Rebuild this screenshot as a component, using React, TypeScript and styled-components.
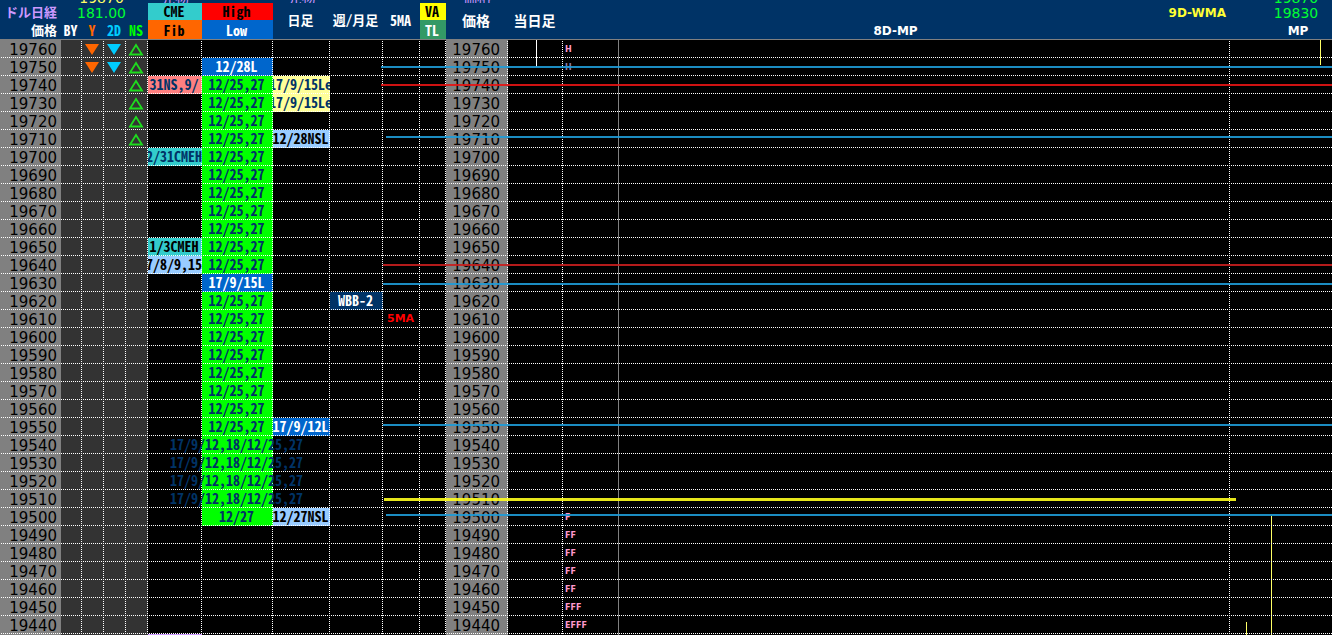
import React from "react";
import styled, { createGlobalStyle, css } from "styled-components";

const mono = `"Noto Sans CJK JP", sans-serif`;
const wide = `"DejaVu Sans", "Noto Sans CJK JP", sans-serif`;

const Global = createGlobalStyle`
  html, body { margin: 0; background: #000; }
  * { box-sizing: border-box; }
`;

const Board = styled.main`
  position: relative;
  height: 100vh;
  overflow: hidden;
  background: #000;
`;

const Grid = styled.table`
  width: 100%;
  table-layout: fixed;
  border-collapse: separate;
  border-spacing: 0;
  font: 700 14px/18px ${mono};
  font-feature-settings: "hwid";
  color: #fff;
`;

const Col = styled.col<{ $w?: number }>`
  width: ${(p) => (p.$w ? `${p.$w}px` : "auto")};
`;

const TailRow = styled.tr`
  height: 3px;
`;

const Tail = styled.th<{ $color?: string; $pl?: number; $pr?: number }>`
  padding: 0 ${(p) => p.$pr || 0}px 0 ${(p) => p.$pl || 0}px;
  background: #003366;
  color: ${(p) => p.$color || "#fff"};
  font: 400 14px/10px ${wide};
`;

const TailText = styled.div`
  display: flex;
  align-items: flex-end;
  justify-content: center;
  height: 3px;
  overflow: hidden;
  white-space: nowrap;
`;

const HeadRow = styled.tr<{ $h: number }>`
  height: ${(p) => p.$h}px;
`;

const Head = styled.th<{
  $bg?: string;
  $color?: string;
  $wide?: boolean;
  $line?: boolean;
  $align?: string;
  $size?: number;
  $regular?: boolean;
  $up?: boolean;
  $pl?: number;
  $pr?: number;
}>`
  padding: ${(p) => (p.$wide ? 2 : 0)}px ${(p) => p.$pr ?? 2}px ${(p) => (p.$up ? 2 : 0)}px
    ${(p) => p.$pl || 0}px;
  height: inherit;
  text-align: ${(p) => p.$align || "center"};
  background: ${(p) => p.$bg || "#003366"};
  color: ${(p) => p.$color || "#fff"};
  white-space: nowrap;
  line-height: 14px;
  font-size: ${(p) => p.$size || 14}px;
  ${(p) => p.$wide && css`font-family: ${wide};`}
  ${(p) => p.$regular && css`font-weight: 400;`}
  ${(p) => p.$line && css`border-bottom: 1px solid #808080;`}
`;

const Row = styled.tr`
  position: relative;
  height: 18px;
`;

const rule = css`
  background-image: repeating-linear-gradient(180deg, transparent 0 1px, #fff 1px 2px);
  background-size: 1px 100%;
  background-position: right top;
  background-repeat: no-repeat;
`;

const Cell = styled.td<{ $bg?: string; $color?: string; $edge?: "dots" | "solid" | "none" }>`
  height: 18px;
  padding: 0;
  background-color: ${(p) => p.$bg || "transparent"};
  color: ${(p) => p.$color || "#003366"};
  ${(p) => (p.$edge || "dots") === "dots" && rule}
  ${(p) => p.$edge === "solid" && css`border-right: 1px solid #808080;`}
`;

const Label = styled.div<{ $spill?: boolean; $wide?: boolean }>`
  display: flex;
  justify-content: center;
  height: 18px;
  padding-right: 2px;
  line-height: 16px;
  white-space: nowrap;
  overflow: ${(p) => (p.$spill ? "visible" : "hidden")};
  position: relative;
  ${(p) => p.$wide && css`font: 700 11px/18px ${wide};`}
`;

const Price = styled.td<{ $edge?: boolean }>`
  height: 18px;
  padding: 2px ${(p) => (p.$edge ? 8 : 4)}px 0 0;
  text-align: right;
  font: 400 15px/16px ${wide};
  color: #000;
  background-color: #808080;
  ${(p) => p.$edge && rule}
`;

/* The first cell of a row also carries the dotted line along the row's foot. */
const RowHead = styled(Price)`
  &::after {
    content: "";
    position: absolute;
    left: 0;
    right: 0;
    bottom: 0;
    height: 1px;
    z-index: 1;
    background: repeating-linear-gradient(90deg, transparent 0 1px, #fff 1px 2px);
  }
`;

const Profile = styled.div<{ $dim?: boolean }>`
  padding: 2px 0 0 2px;
  font: 700 8px/16px ${wide};
  color: ${(p) => (p.$dim ? "#8a7cb0" : "#ff99cc")};
`;

const Mark = styled.svg`
  display: block;
  margin-left: 2px;
`;

const Level = styled.div<{ $top: number; $left: number; $color: string; $h?: number; $right?: number }>`
  position: absolute;
  z-index: 2;
  top: ${(p) => p.$top}px;
  left: ${(p) => p.$left}px;
  right: ${(p) => p.$right || 0}px;
  height: ${(p) => p.$h || 2}px;
  background: ${(p) => p.$color};
  opacity: 0.9;
`;

const Wick = styled.div<{ $top: number; $h?: number; $left?: number; $right?: number; $color: string }>`
  position: absolute;
  top: ${(p) => p.$top}px;
  ${(p) => (p.$h ? `height: ${p.$h}px;` : "bottom: 0;")}
  ${(p) => (p.$left ? `left: ${p.$left}px;` : `right: ${p.$right}px;`)}
  width: 1px;
  background: ${(p) => p.$color};
`;

const Down = ({ color }: { color: string }) => (
  <Mark width="16" height="14" viewBox="0 0 16 14">
    <path d="M1 2H15L8 13Z" fill={color} />
  </Mark>
);

const Up = () => (
  <Mark width="16" height="14" viewBox="0 0 16 14">
    <path d="M8 3L14 12.5H2Z" fill="none" stroke="#1edc1e" strokeWidth="1.8" />
  </Mark>
);

type Tag = { t: string; bg?: string; c?: string; spill?: boolean };

const GREEN = "#00ff00";
const BLUE = "#0066cc";
const PALE = "#99ccff";
const TEAL = "#33cccc";

const fib: Record<number, Tag> = {
  19740: { t: "31NS,9/", bg: "#ff8080" },
  19700: { t: "2/31CMEH", bg: TEAL },
  19650: { t: "1/3CMEH", bg: TEAL, c: "#000" },
  19640: { t: "7/8/9,15", bg: PALE, c: "#000" },
  19430: { t: "", bg: "#cc99ff" },
};

const daily: Record<number, Tag> = {
  19740: { t: "17/9/15Le", bg: "#ffff99" },
  19730: { t: "17/9/15Le", bg: "#ffff99" },
  19710: { t: "12/28NSL", bg: PALE, c: "#000" },
  19550: { t: "17/9/12L", bg: BLUE, c: "#fff" },
  19500: { t: "12/27NSL", bg: PALE, c: "#000" },
};

const highLow = (p: number): Tag | undefined => {
  if (p === 19750) return { t: "12/28L", bg: BLUE, c: "#fff" };
  if (p === 19630) return { t: "17/9/15L", bg: BLUE, c: "#fff" };
  if (p > 19750 || p < 19500) return undefined;
  if (p === 19500) return { t: "12/27", bg: GREEN };
  if (p <= 19540) return { t: "17/9/12,18/12/25,27", bg: GREEN, spill: true };
  return { t: "12/25,27", bg: GREEN };
};

const profile: Record<number, string> = {
  19760: "H", 19750: "H", 19500: "F", 19490: "FF", 19480: "FF",
  19470: "FF", 19460: "FF", 19450: "FFF", 19440: "EFFF",
};

const prices = Array.from({ length: 34 }, (_, i) => 19760 - i * 10);

const TagCell = ({ tag }: { tag?: Tag }) => (
  <Cell $bg={tag?.bg} $color={tag?.c}>
    {tag && <Label $spill={tag.spill}>{tag.t}</Label>}
  </Cell>
);

const widths = [61, 21, 22, 22, 22, 54, 71, 57, 53, 37, 26, 62, 55, 56, 0, 102];

export default function App() {
  return (
    <>
      <Global />
      <Board>
        <Grid>
          <colgroup>
            {widths.map((w, i) => <Col key={i} $w={w} />)}
          </colgroup>
          <thead>
            <TailRow>
              <Tail />
              <Tail $color="#ffff66" colSpan={4} $pr={6}><TailText>19870</TailText></Tail>
              <Tail $color="#cc99ff"><TailText>先物</TailText></Tail>
              <Tail />
              <Tail $color="#cc99ff"><TailText>先物</TailText></Tail>
              <Tail colSpan={3} />
              <Tail $color="#cc99ff"><TailText>価格</TailText></Tail>
              <Tail colSpan={3} />
              <Tail $color="#00ff33" $pl={32} $pr={2}><TailText>19870</TailText></Tail>
            </TailRow>
            <HeadRow $h={17}>
              <Head $color="#cc99ff" $align="right" $size={13} $pr={4}>ドル日経</Head>
              <Head colSpan={4} $color="#00ff33" $wide $regular $pr={6}>181.00</Head>
              <Head $up $bg={TEAL} $color="#000">CME</Head>
              <Head $up $bg="#ff0000" $color="#000">High</Head>
              <Head $up rowSpan={2} $line $size={13}>日足</Head>
              <Head $up rowSpan={2} $line $size={13}>週/月足</Head>
              <Head $up rowSpan={2} $line>5MA</Head>
              <Head $up $bg="#ffff00" $color="#000">VA</Head>
              <Head $up rowSpan={2} $line>価格</Head>
              <Head $up rowSpan={2} $line>当日足</Head>
              <Head colSpan={2} $wide $size={12} $align="right" $color="#ffff33" $pr={4}>9D-WMA</Head>
              <Head $color="#00ff33" $wide $regular $pl={32}>19830</Head>
            </HeadRow>
            <HeadRow $h={20}>
              <Head $line $align="right" $size={13} $pr={4}>価格</Head>
              <Head $line>BY</Head>
              <Head $line $color="#ff6600">Y</Head>
              <Head $line $color="#00ccff">2D</Head>
              <Head $line $color={GREEN}>NS</Head>
              <Head $line $bg="#ff6600" $color="#000">Fib</Head>
              <Head $line $bg={BLUE}>Low</Head>
              <Head $line $bg="#339966">TL</Head>
              <Head colSpan={2} $line $wide $size={12}>8D-MP</Head>
              <Head $line $wide $size={12} $pl={36}>MP</Head>
            </HeadRow>
          </thead>
          <tbody>
            {prices.map((p) => (
              <Row key={p}>
                <RowHead as="th" scope="row">{p}</RowHead>
                <Cell $bg="#333" />
                <Cell $bg="#333">{p >= 19750 && <Down color="#ff6600" />}</Cell>
                <Cell $bg="#333">{p >= 19750 && <Down color="#00ccff" />}</Cell>
                <Cell $bg="#333">{p >= 19710 && <Up />}</Cell>
                <TagCell tag={fib[p]} />
                <TagCell tag={highLow(p)} />
                <TagCell tag={daily[p]} />
                <TagCell tag={p === 19620 ? { t: "WBB-2", bg: "#003366", c: "#fff" } : undefined} />
                <Cell $color="#ff0000">{p === 19610 && <Label $wide>5MA</Label>}</Cell>
                <Cell />
                <Price $edge>{p}</Price>
                <Cell />
                <Cell $edge="solid">
                  {profile[p] && <Profile $dim={p === 19750}>{profile[p]}</Profile>}
                </Cell>
                <Cell />
                <Cell $edge="none" />
              </Row>
            ))}
          </tbody>
        </Grid>
        <Wick $top={40} $h={27} $left={536} $color="#fff" />
        <Wick $top={40} $h={25} $right={11} $color="#ffff66" />
        <Wick $top={516} $right={60} $color="#ffff66" />
        <Wick $top={622} $right={85} $color="#ffff66" />
        <Level $top={66} $left={381} $color="#1e9bd7" />
        <Level $top={84} $left={381} $color="#e61414" />
        <Level $top={136} $left={386} $color="#1e9bd7" />
        <Level $top={264} $left={383} $color="#c81e1e" />
        <Level $top={283} $left={383} $color="#1e9bd7" />
        <Level $top={424} $left={383} $color="#1e9bd7" />
        <Level $top={498} $left={384} $right={96} $h={3} $color="#ffff1e" />
        <Level $top={514} $left={386} $color="#1e9bd7" />
      </Board>
    </>
  );
}
